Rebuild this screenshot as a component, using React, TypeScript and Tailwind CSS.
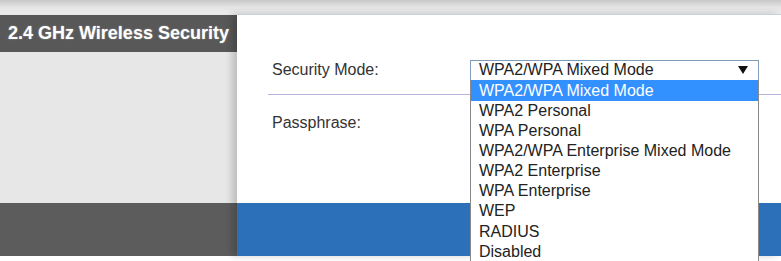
const options = [
  'WPA2/WPA Mixed Mode',
  'WPA2 Personal',
  'WPA Personal',
  'WPA2/WPA Enterprise Mixed Mode',
  'WPA2 Enterprise',
  'WPA Enterprise',
  'WEP',
  'RADIUS',
  'Disabled',
]

function SecuritySelect() {
  return (
    <div className="relative w-[289px]">
      <div className="flex h-[21px] items-center justify-between border border-[#7f9db9] bg-white pl-[8px] pr-[10px] text-[16px] leading-none text-[#222]">
        <span>WPA2/WPA Mixed Mode</span>
        <svg width="10" height="8" viewBox="0 0 10 8">
          <path d="M0 0 L10 0 L5 8 Z" fill="#111" />
        </svg>
      </div>
      <ul className="absolute left-0 top-[20px] z-10 w-full border-x border-b border-[#8a8a8a] bg-white text-[16px] leading-[20px] text-[#222]">
        {options.map((opt, i) => (
          <li
            key={opt}
            className={
              i === 0
                ? 'h-[21px] bg-[#3390ff] pl-[8px] leading-[21px] text-white'
                : 'h-[20.2px] pl-[8px] leading-[20.2px]'
            }
          >
            {opt}
          </li>
        ))}
      </ul>
    </div>
  )
}

export default function App() {
  return (
    <div
      className="flex h-[261px] w-[781px] flex-col overflow-hidden bg-white"
      style={{ fontFamily: '"Liberation Sans", Arial, sans-serif' }}
    >
      <div className="h-[14px] bg-linear-to-b from-[#c8c8c8] via-[#e4e4e4] to-[#ececec]" />
      <div className="flex h-[242px]">
        {/* left column */}
        <div className="flex w-[237px] flex-col bg-[#e7e7e7]">
          <div className="mt-[1px] flex h-[37px] items-center bg-[#585858] pl-[8px] text-[18px] font-bold text-white [text-shadow:0_0_2px_rgba(255,255,255,0.35)]">
            2.4 GHz Wireless Security
          </div>
          <div className="flex-1" />
          <div className="h-[53px] bg-[#5c5c5c]" />
        </div>
        {/* right column */}
        <div className="relative flex flex-1 flex-col shadow-[-5px_0_7px_rgba(0,0,0,0.18)]">
          <div className="flex-1 border-t border-[#c6d0de] bg-white pt-[43px] text-[16px] text-[#333]">
            <div className="flex items-center pl-[35px]">
              <span className="w-[198px]">Security Mode:</span>
              <SecuritySelect />
            </div>
            <div className="ml-[31px] mt-[12px] h-[1px] bg-[#b3b3dc]" />
            <div className="pl-[35px] pt-[19px] leading-[18px]">Passphrase:</div>
          </div>
          <div className="h-[53px] bg-[#2b70b9]" />
        </div>
      </div>
      <div className="h-[5px] bg-white" />
    </div>
  )
}
